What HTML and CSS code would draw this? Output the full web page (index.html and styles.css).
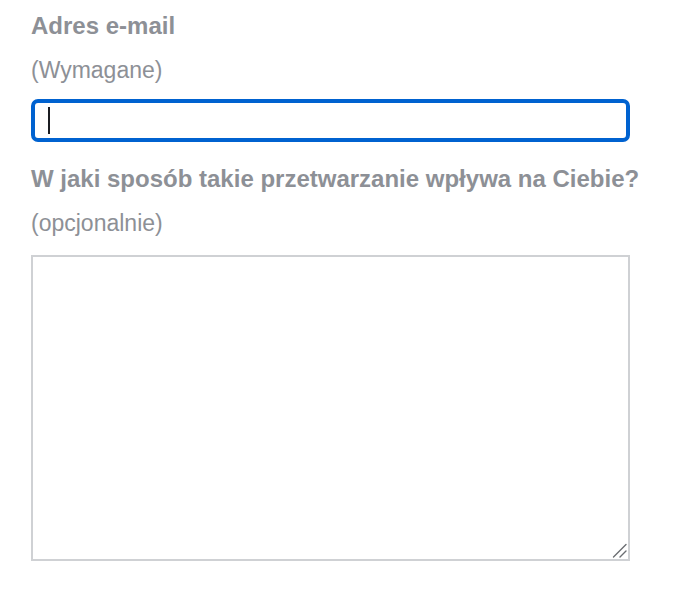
FILE: index.html
```html
<!DOCTYPE html>
<html lang="pl">
<head>
<meta charset="utf-8">
<link rel="stylesheet" href="styles.css">
</head>
<body>
<form class="form">
  <div class="field">
    <label class="label" for="email">Adres e-mail</label>
    <div class="hint">(Wymagane)</div>
    <div class="input focused"><span class="caret"></span></div>
  </div>
  <div class="field field-2">
    <label class="label" for="impact">W jaki sposób takie przetwarzanie wpływa na Ciebie?</label>
    <div class="hint">(opcjonalnie)</div>
    <div class="textarea">
      <svg class="grip" width="16" height="16" viewBox="0 0 16 16"><path d="M14 1.5 L1.5 14 M14 8 L8 14" stroke="#6b6e72" stroke-width="1.4" fill="none" stroke-linecap="round"/></svg>
    </div>
  </div>
</form>
</body>
</html>
```
FILE: styles.css
```css
html, body { margin: 0; padding: 0; background: #fff; }
body { font-family: "Liberation Sans", Arial, Helvetica, sans-serif; }
.form { padding: 12px 0 0 31px; width: 599px; }
.field { display: flex; flex-direction: column; }
.field-2 { margin-top: 23px; }
.label { font-weight: bold; font-size: 24px; line-height: 28px; color: #8d9096; white-space: nowrap; }
.hint { font-size: 23px; line-height: 28px; color: #8d9096; margin-top: 16px; }
.input { margin-top: 15px; height: 35px; border: 4px solid #0062d0; border-radius: 7px; display: flex; align-items: center; padding-left: 13px; }
.caret { width: 2px; height: 27px; background: #1b1d22; }
.textarea { margin-top: 18px; height: 302px; border: 2px solid #cfd1d4; position: relative; }
.grip { position: absolute; right: 0; bottom: 0; }
```
